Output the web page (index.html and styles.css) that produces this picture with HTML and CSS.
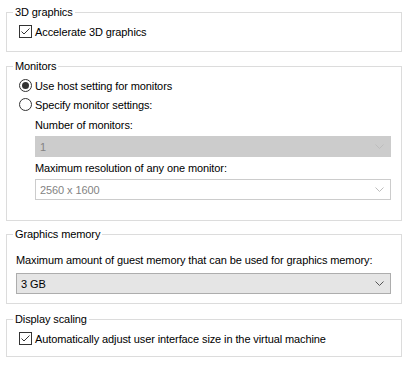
FILE: index.html
```html
<html lang="en">
<head>
  <meta charset="UTF-8">
  <title>Display settings</title>
  <link rel="stylesheet" href="styles.css">
</head>
<body>
  <div class="page">
    <fieldset class="group g-3d">
      <legend>3D graphics</legend>
      <label class="row">
        <svg class="check" width="13" height="13" viewBox="0 0 13 13"><rect x="0.5" y="0.5" width="12" height="12" fill="#fff" stroke="#333"/><path d="M2.5 6.5 L5 9 L10.5 3.5" fill="none" stroke="#333" stroke-width="1"/></svg>
        <span>Accelerate 3D graphics</span>
      </label>
    </fieldset>

    <fieldset class="group g-monitors">
      <legend>Monitors</legend>
      <label class="row">
        <svg class="radio" width="13" height="13" viewBox="0 0 13 13"><circle cx="6.5" cy="6.5" r="6" fill="#fff" stroke="#333"/><circle cx="6.5" cy="6.5" r="3.5" fill="#333"/></svg>
        <span>Use host setting for monitors</span>
      </label>
      <label class="row">
        <svg class="radio" width="13" height="13" viewBox="0 0 13 13"><circle cx="6.5" cy="6.5" r="6" fill="#fff" stroke="#333"/></svg>
        <span>Specify monitor settings:</span>
      </label>
      <div class="sub">
        <div class="field-label">Number of monitors:</div>
        <div class="combo disabled">
          <span>1</span>
          <svg class="chev" width="9" height="5" viewBox="0 0 9 5"><path d="M0.5 0.5 L4.5 4.5 L8.5 0.5" fill="none" stroke="#bdbdbd"/></svg>
        </div>
        <div class="field-label">Maximum resolution of any one monitor:</div>
        <div class="combo readonly">
          <span>2560 x 1600</span>
          <svg class="chev" width="9" height="5" viewBox="0 0 9 5"><path d="M0.5 0.5 L4.5 4.5 L8.5 0.5" fill="none" stroke="#bdbdbd"/></svg>
        </div>
      </div>
    </fieldset>

    <fieldset class="group g-memory">
      <legend>Graphics memory</legend>
      <div class="field-label">Maximum amount of guest memory that can be used for graphics memory:</div>
      <div class="combo active">
        <span>3 GB</span>
        <svg class="chev" width="9" height="5" viewBox="0 0 9 5"><path d="M0.5 0.5 L4.5 4.5 L8.5 0.5" fill="none" stroke="#555"/></svg>
      </div>
    </fieldset>

    <fieldset class="group g-scaling">
      <legend>Display scaling</legend>
      <label class="row">
        <svg class="check" width="13" height="13" viewBox="0 0 13 13"><rect x="0.5" y="0.5" width="12" height="12" fill="#fff" stroke="#333"/><path d="M2.5 6.5 L5 9 L10.5 3.5" fill="none" stroke="#333" stroke-width="1"/></svg>
        <span>Automatically adjust user interface size in the virtual machine</span>
      </label>
    </fieldset>
  </div>
</body>
</html>
```

FILE: styles.css
```css
body {
  margin: 0;
  background-color: #fff;
  font-family: "Liberation Sans", Arial, sans-serif;
  font-size: 11px;
  letter-spacing: -0.1px;
  color: #000;
}

.page {
  padding: 4px 8px 0 6px;
}

.group {
  margin: 0;
  border: 1px solid #dcdcdc;
  padding: 2px 10px 0 12px;
}

.group legend {
  padding: 0 2px;
  margin-left: -6px;
  line-height: 16px;
}

.g-3d {
  padding-bottom: 10px;
}

.g-monitors {
  margin-top: 6px;
  padding-bottom: 18px;
}

.g-memory {
  margin-top: 5px;
  padding: 9px 10px 9px 9px;
}

.g-memory legend {
  margin-left: -3px;
}

.g-scaling {
  margin-top: 7px;
  padding-bottom: 8px;
}

.row {
  display: flex;
  align-items: center;
  gap: 3px;
  height: 19px;
}

.row svg {
  flex: none;
}

.sub {
  padding: 2px 0 0 16px;
}

.field-label {
  line-height: 18px;
  height: 18px;
}

.sub .combo {
  margin-bottom: 2px;
}

.sub .field-label + .combo {
  margin-top: 2px;
}

.g-memory .combo {
  margin-top: 4px;
}

.combo {
  height: 21px;
  box-sizing: border-box;
  display: flex;
  align-items: center;
  justify-content: space-between;
  padding: 0 6px 0 4px;
  border: 1px solid #ccc;
}

.combo.disabled {
  background-color: #ccc;
  border-color: #ccc;
  color: #838383;
}

.combo.readonly {
  background-color: #fff;
  color: #838383;
}

.combo.active {
  background-color: #e5e5e5;
  border-color: #adadad;
}
```
